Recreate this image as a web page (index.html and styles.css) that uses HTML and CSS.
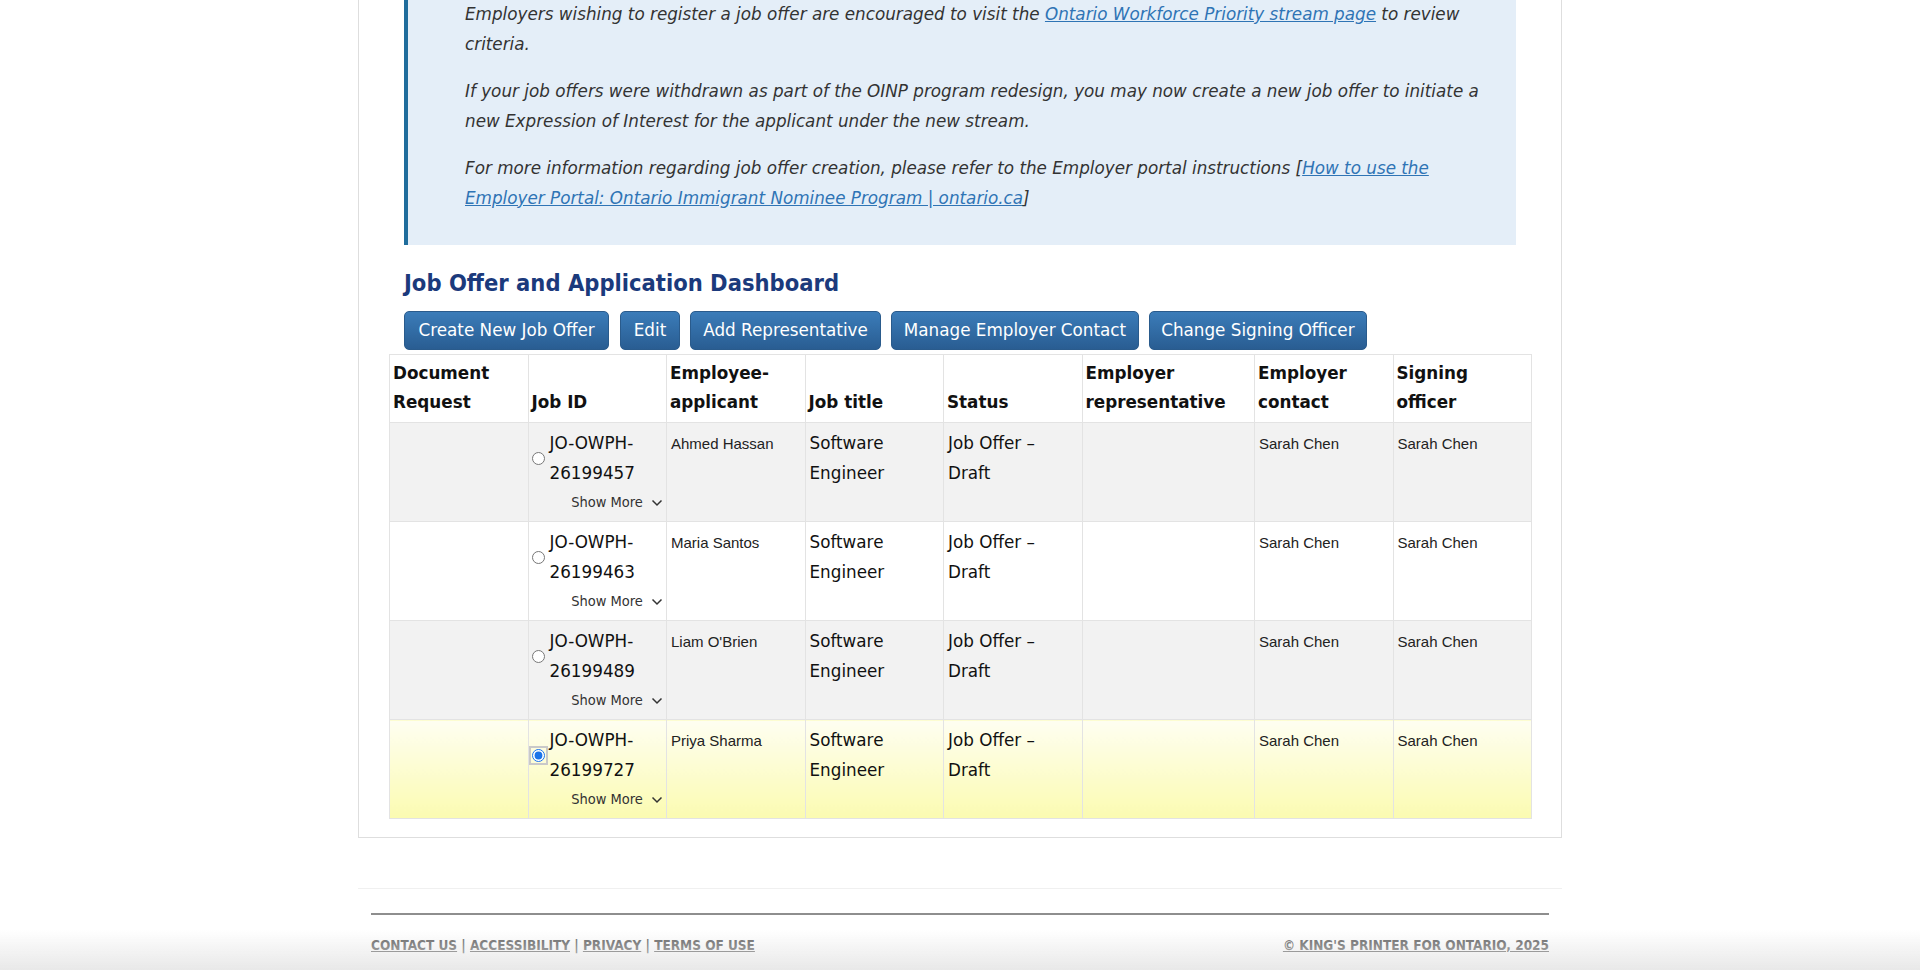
FILE: index.html
```html
<!DOCTYPE html>
<html lang="en">
<head>
<meta charset="utf-8">
<title>Job Offer and Application Dashboard</title>
<link rel="stylesheet" href="styles.css">
</head>
<body>
<main class="card">
  <div class="callout">
    <p>Employers wishing to register a job offer are encouraged to visit the <a href="#">Ontario Workforce Priority stream page</a> to review criteria.</p>
    <p>If your job offers were withdrawn as part of the OINP program redesign, you may now create a new job offer to initiate a new Expression of Interest for the applicant under the new stream.</p>
    <p>For more information regarding job offer creation, please refer to the Employer portal instructions [<a href="#">How to use the Employer Portal: Ontario Immigrant Nominee Program | ontario.ca</a>]</p>
  </div>

  <h2 class="dash-title">Job Offer and Application Dashboard</h2>

  <div class="actions">
    <button class="btn btn-wide">Create New Job Offer</button>
    <button class="btn">Edit</button>
    <button class="btn">Add Representative</button>
    <button class="btn btn-tight">Manage Employer Contact</button>
    <button class="btn btn-tight">Change Signing Officer</button>
  </div>

  <table class="jobs">
    <colgroup>
      <col class="c-std"><col class="c-std"><col class="c-std"><col class="c-std"><col class="c-std"><col class="c-wide"><col class="c-std"><col class="c-std">
    </colgroup>
    <thead>
      <tr>
        <th>Document Request</th>
        <th>Job ID</th>
        <th>Employee-applicant</th>
        <th>Job title</th>
        <th>Status</th>
        <th>Employer representative</th>
        <th>Employer contact</th>
        <th>Signing officer</th>
      </tr>
    </thead>
    <tbody>
      <tr class="odd">
        <td></td>
        <td class="jobid">
          <div class="jobid-main"><input type="radio" name="job"><span>JO-OWPH-26199457</span></div>
          <div class="show-more">Show More <svg width="12" height="8" viewBox="0 0 12 8"><polyline points="1.5,1.5 6,6 10.5,1.5" fill="none" stroke="#333" stroke-width="1.5"/></svg></div>
        </td>
        <td class="person">Ahmed Hassan</td>
        <td>Software Engineer</td>
        <td>Job Offer – Draft</td>
        <td></td>
        <td class="person">Sarah Chen</td>
        <td class="person">Sarah Chen</td>
      </tr>
      <tr>
        <td></td>
        <td class="jobid">
          <div class="jobid-main"><input type="radio" name="job"><span>JO-OWPH-26199463</span></div>
          <div class="show-more">Show More <svg width="12" height="8" viewBox="0 0 12 8"><polyline points="1.5,1.5 6,6 10.5,1.5" fill="none" stroke="#333" stroke-width="1.5"/></svg></div>
        </td>
        <td class="person">Maria Santos</td>
        <td>Software Engineer</td>
        <td>Job Offer – Draft</td>
        <td></td>
        <td class="person">Sarah Chen</td>
        <td class="person">Sarah Chen</td>
      </tr>
      <tr class="odd">
        <td></td>
        <td class="jobid">
          <div class="jobid-main"><input type="radio" name="job"><span>JO-OWPH-26199489</span></div>
          <div class="show-more">Show More <svg width="12" height="8" viewBox="0 0 12 8"><polyline points="1.5,1.5 6,6 10.5,1.5" fill="none" stroke="#333" stroke-width="1.5"/></svg></div>
        </td>
        <td class="person">Liam O'Brien</td>
        <td>Software Engineer</td>
        <td>Job Offer – Draft</td>
        <td></td>
        <td class="person">Sarah Chen</td>
        <td class="person">Sarah Chen</td>
      </tr>
      <tr class="selected">
        <td></td>
        <td class="jobid">
          <div class="jobid-main"><input type="radio" name="job" class="focused" checked><span>JO-OWPH-26199727</span></div>
          <div class="show-more">Show More <svg width="12" height="8" viewBox="0 0 12 8"><polyline points="1.5,1.5 6,6 10.5,1.5" fill="none" stroke="#333" stroke-width="1.5"/></svg></div>
        </td>
        <td class="person">Priya Sharma</td>
        <td>Software Engineer</td>
        <td>Job Offer – Draft</td>
        <td></td>
        <td class="person">Sarah Chen</td>
        <td class="person">Sarah Chen</td>
      </tr>
    </tbody>
  </table>
</main>

<footer class="site-footer">
  <hr class="footer-rule">
  <div class="footer-row">
    <nav class="footer-links">
      <a href="#">CONTACT US</a> | <a href="#">ACCESSIBILITY</a> | <a href="#">PRIVACY</a> | <a href="#">TERMS OF USE</a>
    </nav>
    <a href="#" class="copyright">© KING'S PRINTER FOR ONTARIO, 2025</a>
  </div>
</footer>
</body>
</html>
```

FILE: styles.css
```css
* { box-sizing: border-box; }

html, body {
  margin: 0;
  padding: 0;
  background: #ffffff;
}

body {
  font-family: "DejaVu Sans", Verdana, sans-serif;
  font-size: 16.8px;
  color: #1a1a1a;
  height: 970px;
  overflow: hidden;
}

body::after {
  content: "";
  position: fixed;
  left: 0;
  right: 0;
  bottom: 0;
  height: 40px;
  background: linear-gradient(rgba(232, 232, 232, 0), rgba(228, 228, 228, 0.85));
  pointer-events: none;
}

.card {
  width: 1204px;
  margin: 0 auto;
  border: 1px solid #dedede;
  border-top: none;
  padding: 0 30px 18px;
}

.callout {
  margin: 0 15px;
  border-left: 4px solid #1f6d9c;
  background: #e4eef8;
  padding: 0 21px 32px 57px;
}

.callout p {
  margin: 0 0 18px;
  font-style: italic;
  color: #333333;
  line-height: 29.5px;
}

.callout p:last-child { margin-bottom: 0; }

.callout a {
  color: #2f74b5;
  text-decoration: underline;
}

.dash-title {
  margin: 22.5px 15px 13px;
  font-family: "DejaVu Sans Condensed", "DejaVu Sans", sans-serif;
  font-weight: bold;
  font-size: 23.5px;
  line-height: 30px;
  color: #1b3a7c;
}

.actions {
  display: flex;
  gap: 10px;
  margin: 0 15px 4px;
}

.btn {
  font-family: "DejaVu Sans", Verdana, sans-serif;
  font-size: 16.8px;
  line-height: 23px;
  color: #ffffff;
  background: linear-gradient(#3b7cb9, #295d92);
  border: 1px solid #2a5b8c;
  border-radius: 5px;
  padding: 7px 12.5px;
  cursor: pointer;
}

.btn-wide { padding: 7px 13.5px; margin-right: 1px; }
.btn-tight { padding: 7px 11.5px; }

.jobs {
  width: 1142px;
  border-collapse: collapse;
  table-layout: fixed;
  border: 1px solid #e3e3e3;
}

.c-std { width: 138.5px; }
.c-wide { width: 172.5px; }

.jobs th,
.jobs td {
  border: 1px solid #e3e3e3;
  padding: 5px 4px 5px 4px;
  line-height: 29.4px;
  text-align: left;
}

.jobs th {
  vertical-align: bottom;
  font-weight: bold;
  background: #ffffff;
  color: #111111;
  padding-top: 4px;
  padding-left: 3px;
}

.jobs td {
  vertical-align: top;
  color: #111111;
  height: 99px;
  padding-top: 6px;
  padding-bottom: 4px;
}

.jobs tr.odd td { background: #f2f2f2; }

.jobs tr.selected td {
  background: linear-gradient(#fefef1, #fbfbb1);
}

.jobs td.person {
  font-family: "Liberation Sans", Arial, sans-serif;
  font-size: 15px;
  color: #222222;
}

.jobid-main {
  display: flex;
  align-items: center;
}

.jobid-main input {
  margin: 0 5px 0 -1px;
  width: 13px;
  height: 13px;
  flex: none;
  accent-color: #1a73e8;
}

.jobid-main input.focused {
  outline: 2px solid #c9c9c9;
  outline-offset: 1px;
}

.show-more {
  text-align: right;
  font-family: "DejaVu Sans Condensed", "DejaVu Sans", sans-serif;
  font-size: 14.5px;
  line-height: 29px;
  color: #333333;
  margin-right: -1px;
}

.show-more svg {
  margin-left: 4px;
  vertical-align: 0;
}

.site-footer {
  width: 1204px;
  margin: 50px auto 0;
  border-top: 1px solid #f0f0f0;
  padding: 0 13px;
}

.footer-rule {
  margin: 24px 0 0;
  border: none;
  height: 2px;
  background: #8e8e8e;
}

.footer-row {
  display: flex;
  justify-content: space-between;
  margin-top: 22px;
  font-family: "DejaVu Sans Condensed", "DejaVu Sans", sans-serif;
  font-weight: bold;
  font-size: 13.5px;
  line-height: 17px;
  color: #5e5e5e;
}

.footer-row a {
  color: #5e5e5e;
  text-decoration: underline;
}
```
